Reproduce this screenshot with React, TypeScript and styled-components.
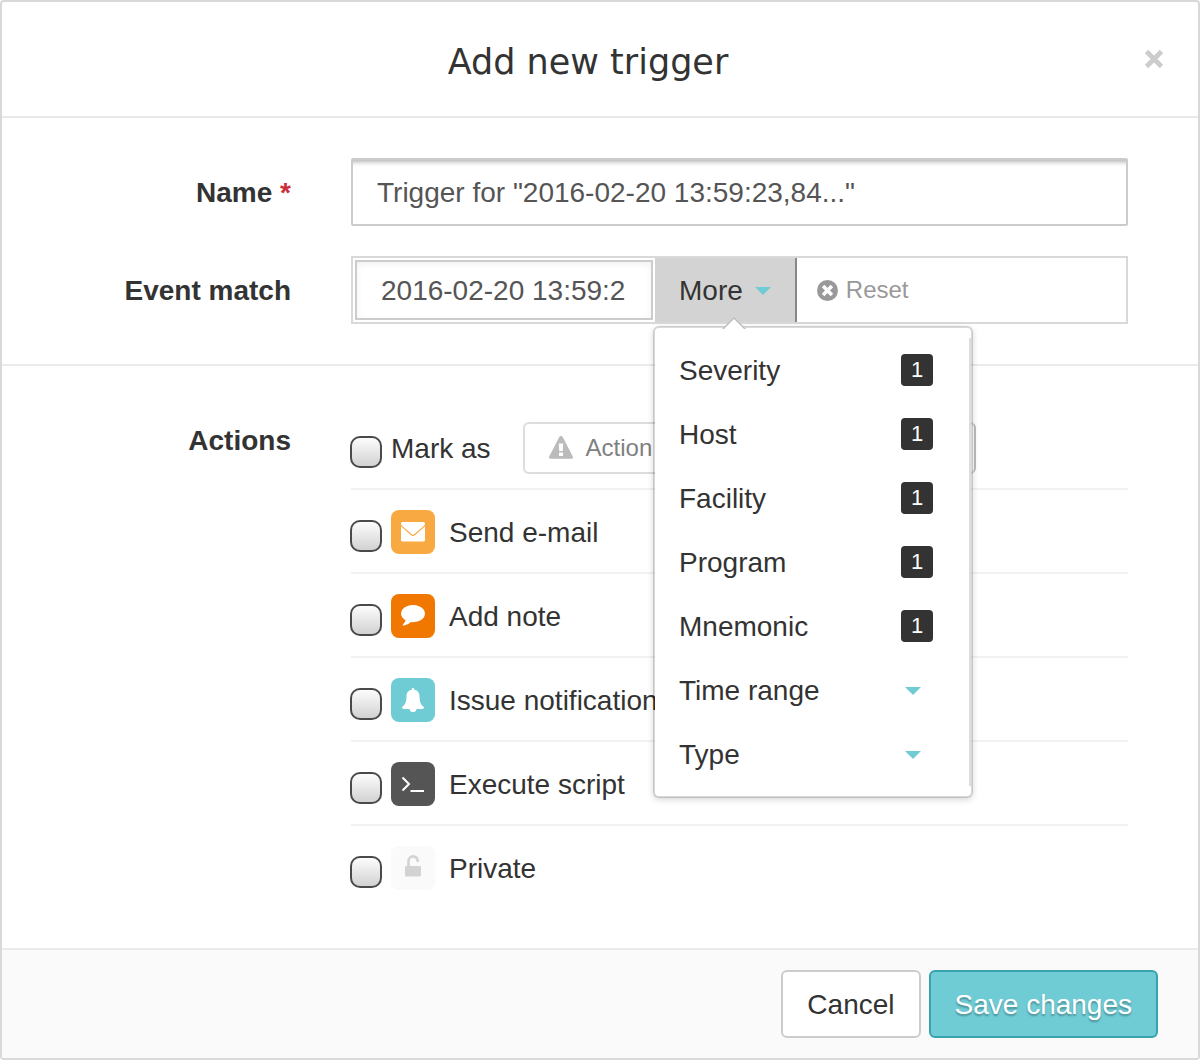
import React, { useId, useState } from "react";
import styled, { createGlobalStyle, css } from "styled-components";

const color = {
  text: "#333",
  input: "#555",
  muted: "#999",
  border: "#ccc",
  frame: "#d9d9d9",
  accent: "#6fccd5",
};

const GlobalStyle = createGlobalStyle`
  *, *::before, *::after { box-sizing: border-box; }
  body { margin: 0; background: #fff; }
  body, button, input { font-family: "Liberation Sans", Arial, sans-serif; font-size: 28px; color: ${color.text}; }
  button { cursor: pointer; }
`;

const Dialog = styled.form`
  border: 2px solid ${color.frame};
  border-radius: 4px;
  background: #fff;
  line-height: 40px;
`;

const Header = styled.header`
  display: flex;
  align-items: center;
  min-height: 116px;
  padding: 0 24px 0 40px;
  border-bottom: 2px solid #e8e8e8;
`;

const Title = styled.h1`
  flex: 1;
  margin: 0;
  padding-top: 6px;
  font: 400 35px/40px "DejaVu Sans", Verdana, sans-serif;
  text-align: center;
`;

const CloseButton = styled.button`
  display: grid;
  place-items: center;
  width: 40px;
  height: 40px;
  padding: 0;
  border: 0;
  background: none;
`;

const Section = styled.section`
  display: grid;
  grid-template-columns: 289px minmax(0, 1fr);
  gap: 30px 60px;
  padding: 40px 70px 40px 0;

  & + & { border-top: 2px solid #ebebeb; }
`;

const labelStyle = css`
  padding-top: 2px;
  font-weight: 700;
  line-height: 66px;
  text-align: right;
`;
const Label = styled.label`${labelStyle}`;
const GroupLabel = styled.div`${labelStyle}`;

const Required = styled.span`
  color: #c9303c;
`;

const TextInput = styled.input`
  width: 100%;
  height: 68px;
  padding: 2px 24px 0;
  border: 2px solid ${color.border};
  border-radius: 2px;
  background: #fff;
  box-shadow: inset 0 7px 5px -5px rgba(0, 0, 0, 0.3);
  color: ${color.input};
  outline: 0;
`;

const MatchBar = styled.div`
  display: flex;
  height: 68px;
  border: 2px solid ${color.frame};
`;

const MatchInput = styled(TextInput)`
  width: 298px;
  height: 60px;
  margin: 2px;
  border-radius: 0;
  box-shadow: inset 0 2px 6px rgba(0, 0, 0, 0.06);
`;

const MoreWrap = styled.div`
  position: relative;
  display: flex;
`;

const MoreButton = styled.button`
  display: flex;
  align-items: center;
  gap: 12px;
  padding: 2px 24px 0;
  border: 0;
  border-right: 2px solid #888;
  background: #d3d3d3;
`;

const Caret = styled.span`
  border: 8px solid transparent;
  border-top-color: ${color.accent};
  border-bottom: 0;
`;

const ResetButton = styled.button`
  display: flex;
  align-items: center;
  gap: 8px;
  padding: 0 20px;
  border: 0;
  background: none;
  color: ${color.muted};
  font-size: 24px;
`;

const Popover = styled.div`
  position: absolute;
  z-index: 1;
  top: 68px;
  left: -2px;
  width: 320px;
  padding: 10px 0;
  border: 2px solid rgba(0, 0, 0, 0.15);
  border-radius: 6px;
  background: #fff;
  background-clip: padding-box;
  box-shadow: 0 2px 6px rgba(0, 0, 0, 0.15);
`;

const Pointer = styled.svg`
  position: absolute;
  top: -11px;
  left: 66px;
`;

const Menu = styled.ul`
  margin: 0;
  padding: 0;
  border-right: 2px solid #ddd;
  list-style: none;
`;

const MenuItem = styled.button`
  display: flex;
  align-items: center;
  justify-content: space-between;
  width: 100%;
  height: 64px;
  padding: 2px 36px 0 24px;
  border: 0;
  background: none;
`;

const Indicator = styled.span<{ $filled: boolean }>`
  display: grid;
  place-items: center;
  width: ${(p) => (p.$filled ? "32px" : "40px")};
  height: 32px;
  margin-bottom: ${(p) => (p.$filled ? "2px" : "0")};
  border-radius: 4px;
  background: ${(p) => (p.$filled ? color.text : "none")};
  color: #fff;
  font-size: 22px;
`;

const ActionList = styled.div`
  display: flex;
  flex-direction: column;
`;

const ActionRow = styled.div`
  display: flex;
  align-items: center;
  min-height: 84px;
  padding-top: 2px;
  border-bottom: 2px solid #f2f2f2;

  &:last-child { min-height: 82px; border-bottom: 0; }
`;

const Checkbox = styled.input`
  appearance: none;
  width: 32px;
  height: 32px;
  margin: 8px 9px 0 -1px;
  border: 2px solid #4a4a4a;
  border-radius: 10px;
  background: linear-gradient(#fcfcfc, #d2d2d2);

  &:checked { background: ${color.accent}; }
`;

const ActionLabel = styled.label`
  display: flex;
  align-items: center;
  gap: 14px;
`;

const ActionName = styled.span`
  padding-top: 2px;
`;

const IconTile = styled.span<{ $bg: string }>`
  display: grid;
  place-items: center;
  width: 44px;
  height: 44px;
  border-radius: 8px;
  background: ${(p) => p.$bg};
`;

const StatusButton = styled.button`
  display: flex;
  align-items: center;
  gap: 12px;
  width: 453px;
  height: 52px;
  margin-left: 32px;
  padding: 0 23px;
  border: 2px solid #ddd;
  border-right-color: #bbb;
  border-radius: 6px;
  background: #fff;
  color: #808080;
  font-size: 24px;
`;

const Footer = styled.footer`
  display: flex;
  justify-content: flex-end;
  gap: 8px;
  padding: 20px 40px;
  border-top: 2px solid #ebebeb;
  background: #fafafa;
`;

const Button = styled.button<{ $primary?: boolean }>`
  height: 68px;
  padding: 2px 24px 0;
  border: 2px solid ${(p) => (p.$primary ? "#36a3ad" : color.border)};
  border-radius: 6px;
  background: ${(p) => (p.$primary ? color.accent : "#fff")};
  color: ${(p) => (p.$primary ? "#fff" : color.text)};
  text-shadow: ${(p) => (p.$primary ? "0 2px 2px rgba(0, 0, 0, 0.3)" : "none")};
`;

const CloseIcon = () => (
  <svg width="20" height="20" viewBox="0 0 20 20" aria-hidden="true">
    <path d="M2.500 2.500 17.500 17.500M17.500 2.500 2.500 17.500" stroke="#ccc" strokeWidth="4.600" />
  </svg>
);

const ResetIcon = () => (
  <svg width="21" height="21" viewBox="0 0 20 20" aria-hidden="true">
    <circle cx="10" cy="10" r="10" fill="#999" />
    <path d="M5.800 5.800 14.200 14.200M14.200 5.800 5.800 14.200" stroke="#fff" strokeWidth="3.400" />
  </svg>
);

const WarningIcon = () => (
  <svg width="26" height="24" viewBox="0 0 26 24" aria-hidden="true">
    <path d="M13 0c.8 0 1.400.4 1.700 1L24.800 20.500c.6 1.100 0 2.200-1.300 2.200h-21C1.200 22.700.6 21.600 1.200 20.500L11.300 1C11.600.4 12.200 0 13 0Z" fill="#bbb" />
    <path d="M10.800 7.500h4.400l-.4 7.500h-3.600ZM11 16.500h4v3.500h-4Z" fill="#fff" />
  </svg>
);

const MailIcon = () => (
  <svg width="24" height="20" viewBox="0 0 24 20" fill="#fff" aria-hidden="true">
    <path d="M1.500 0h21Q24 0 24 1.500q0 1.400-1 2.300L13.500 12q-1.500 1.200-3 0L1 3.800Q0 2.900 0 1.500 0 0 1.500 0Z" />
    <path d="M0 4.300 10 13.200q2 1.500 4 0L24 4.300V18q0 1.500-1.500 1.500h-21Q0 19.500 0 18Z" />
  </svg>
);

const NoteIcon = () => (
  <svg width="24" height="22" viewBox="0 128 1792 1640" fill="#fff" aria-hidden="true">
    <path d="M1792 768q0 174-120 321.500t-326 233-450 85.500q-70 0-145-8-198 175-460 242-49 14-114 22-17 2-30.500-9t-17.500-29v-1q-3-4-.5-12t2-10 4.500-9.500l6-9 7-8.500 8-9q7-8 31-34.500t34.500-38 31-39.500 32.500-51 27-59 26-76q-157-89-247.500-220t-90.500-281q0-174 120-321.500t326-233 450-85.500 450 85.500 326 233 120 321.500z" />
  </svg>
);

const BellIcon = () => (
  <svg width="22" height="24" viewBox="0 0 22 25" preserveAspectRatio="none" fill="#fff" aria-hidden="true">
    <path d="M11 0c.8 0 1.300.6 1.300 1.400v.5c3.200.5 5.200 3 5.200 6.800 0 6.500 1.800 9.300 4.500 11.300 0 1-.8 1.800-1.800 1.800H14.500a3.500 3.300 0 0 1-7 0H1.800C.8 21.800 0 21 0 20c2.700-2 4.500-4.800 4.500-11.300 0-3.800 2-6.300 5.200-6.800v-.5C9.700.6 10.200 0 11 0Z" />
  </svg>
);

const ScriptIcon = () => (
  <svg width="24" height="20" viewBox="0 0 24 20" fill="none" stroke="#fff" strokeWidth="2" aria-hidden="true">
    <path d="m1.500 3.500 6.500 6.500L1.500 16.500M9.500 17H23" />
  </svg>
);

const UnlockIcon = () => (
  <svg width="18" height="26" viewBox="0 0 18 26" aria-hidden="true">
    <rect x="1" y="11" width="16" height="10.500" rx="1" fill="#d3d3d3" />
    <path d="M4.500 11.500V6a4.600 4.600 0 0 1 9.200 0v1" fill="none" stroke="#d3d3d3" strokeWidth="2.600" />
  </svg>
);

const filters: { name: string; count?: number }[] = [
  { name: "Severity", count: 1 },
  { name: "Host", count: 1 },
  { name: "Facility", count: 1 },
  { name: "Program", count: 1 },
  { name: "Mnemonic", count: 1 },
  { name: "Time range" },
  { name: "Type" },
];

const actions = [
  { name: "Send e-mail", bg: "#f9a942", Icon: MailIcon },
  { name: "Add note", bg: "#f07800", Icon: NoteIcon },
  { name: "Issue notification", bg: color.accent, Icon: BellIcon },
  { name: "Execute script", bg: "#555", Icon: ScriptIcon },
  { name: "Private", bg: "#fafafa", Icon: UnlockIcon },
];

export default function App() {
  const id = useId();
  const [open, setOpen] = useState(true);
  const [name, setName] = useState('Trigger for "2016-02-20 13:59:23,84..."');
  const [match, setMatch] = useState("2016-02-20 13:59:2");

  return (
    <>
      <GlobalStyle />
      <Dialog onSubmit={(e) => e.preventDefault()}>
        <Header>
          <Title>Add new trigger</Title>
          <CloseButton type="button" aria-label="Close">
            <CloseIcon />
          </CloseButton>
        </Header>

        <Section>
          <Label htmlFor={`${id}-name`}>
            Name <Required>*</Required>
          </Label>
          <TextInput id={`${id}-name`} value={name} onChange={(e) => setName(e.target.value)} />

          <Label htmlFor={`${id}-match`}>Event match</Label>
          <MatchBar>
            <MatchInput id={`${id}-match`} value={match} onChange={(e) => setMatch(e.target.value)} />
            <MoreWrap>
              <MoreButton type="button" aria-expanded={open} onClick={() => setOpen(!open)}>
                More <Caret />
              </MoreButton>
              {open && (
                <Popover>
                  <Pointer width="26" height="12" viewBox="0 0 26 12" aria-hidden="true">
                    <path d="M1 12 13 0 25 12Z" fill="#bdbdbd" />
                    <path d="M3 12 13 2 23 12Z" fill="#fff" />
                  </Pointer>
                  <Menu>
                    {filters.map((f) => (
                      <li key={f.name}>
                        <MenuItem type="button">
                          {f.name}
                          <Indicator $filled={f.count !== undefined}>{f.count ?? <Caret />}</Indicator>
                        </MenuItem>
                      </li>
                    ))}
                  </Menu>
                </Popover>
              )}
            </MoreWrap>
            <ResetButton type="button" onClick={() => setMatch("")}>
              <ResetIcon />
              Reset
            </ResetButton>
          </MatchBar>
        </Section>

        <Section>
          <GroupLabel id={`${id}-actions`}>Actions</GroupLabel>
          <ActionList role="group" aria-labelledby={`${id}-actions`}>
            <ActionRow>
              <Checkbox type="checkbox" id={`${id}-mark`} />
              <ActionLabel htmlFor={`${id}-mark`}>
                <ActionName>Mark as</ActionName>
              </ActionLabel>
              <StatusButton type="button">
                <WarningIcon />
                Action
              </StatusButton>
            </ActionRow>
            {actions.map(({ name: label, bg, Icon }, i) => (
              <ActionRow key={label}>
                <Checkbox type="checkbox" id={`${id}-action-${i}`} />
                <ActionLabel htmlFor={`${id}-action-${i}`}>
                  <IconTile $bg={bg}>
                    <Icon />
                  </IconTile>
                  <ActionName>{label}</ActionName>
                </ActionLabel>
              </ActionRow>
            ))}
          </ActionList>
        </Section>

        <Footer>
          <Button type="button">Cancel</Button>
          <Button type="submit" $primary>
            Save changes
          </Button>
        </Footer>
      </Dialog>
    </>
  );
}
